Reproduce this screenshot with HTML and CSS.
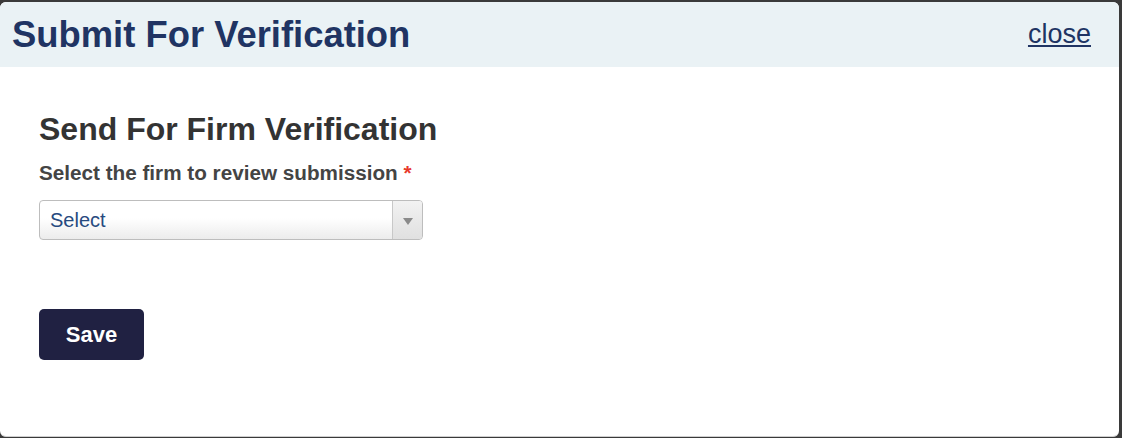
FILE: index.html
```html
<!DOCTYPE html>
<html lang="en">
<head>
    <meta charset="UTF-8">
    <title>Submit For Verification</title>
    <link rel="stylesheet" href="styles.css">
</head>
<body>
<div class="dialog">
    <div class="dialog-head">
        <h1>Submit For Verification</h1>
        <a href="#" class="close">close</a>
    </div>
    <div class="dialog-body">
        <h2>Send For Firm Verification</h2>
        <label class="field-label">Select the firm to review submission <span class="req">*</span></label>
        <div class="select">
            <span class="select-text">Select</span>
            <span class="select-arrow"><b></b></span>
        </div>
        <button class="btn-save">Save</button>
    </div>
</div>
</body>
</html>
```

FILE: styles.css
```css
* {
    margin: 0;
    padding: 0;
    box-sizing: border-box;
}

html, body {
    height: 100%;
}

body {
    background: #3a3a3a;
    font-family: "Liberation Sans", Arial, sans-serif;
    padding: 2px 3px 1px 0;
}

.dialog {
    height: 435px;
    background: #fff;
    border-radius: 6px;
    border-bottom: 1px solid #cfcfcf;
    overflow: hidden;
}

.dialog-head {
    height: 65px;
    background: #eaf2f5;
    display: flex;
    align-items: center;
    justify-content: space-between;
    padding: 0 28px 0 12px;
}

.dialog-head h1 {
    font-size: 36.4px;
    font-weight: bold;
    color: #203463;
    line-height: 40px;
}

.close {
    font-size: 27px;
    color: #203463;
    text-decoration: underline;
}

.dialog-body {
    padding: 44px 39px 0;
}

.dialog-body h2 {
    font-size: 32px;
    font-weight: bold;
    color: #333;
    line-height: 36px;
}

.field-label {
    display: block;
    margin-top: 14px;
    font-size: 20.7px;
    line-height: 23px;
    font-weight: bold;
    color: #444;
}

.req {
    color: #e8392b;
}

.select {
    width: 384px;
    height: 40px;
    margin-top: 16px;
    border: 1px solid #bdbdbd;
    border-radius: 4px;
    background: linear-gradient(#fff 0%, #fff 45%, #ececec 100%);
    display: flex;
    align-items: center;
}

.select-text {
    flex: 1;
    padding-left: 10px;
    font-size: 20px;
    color: #274a7f;
}

.select-arrow {
    width: 30px;
    height: 100%;
    border-left: 1px solid #c8c8c8;
    background: linear-gradient(#f2f2f2, #e0e0e0);
    border-radius: 0 3px 3px 0;
    display: flex;
    align-items: center;
    justify-content: center;
}

.select-arrow b {
    width: 0;
    height: 0;
    border-left: 5px solid transparent;
    border-right: 5px solid transparent;
    border-top: 7px solid #8a8a8a;
    margin-top: 2px;
}

.btn-save {
    display: block;
    margin-top: 69px;
    width: 105px;
    height: 51px;
    border: none;
    border-radius: 5px;
    background: #202142;
    color: #fff;
    font-family: "Liberation Sans", Arial, sans-serif;
    font-size: 22px;
    font-weight: bold;
}
```
